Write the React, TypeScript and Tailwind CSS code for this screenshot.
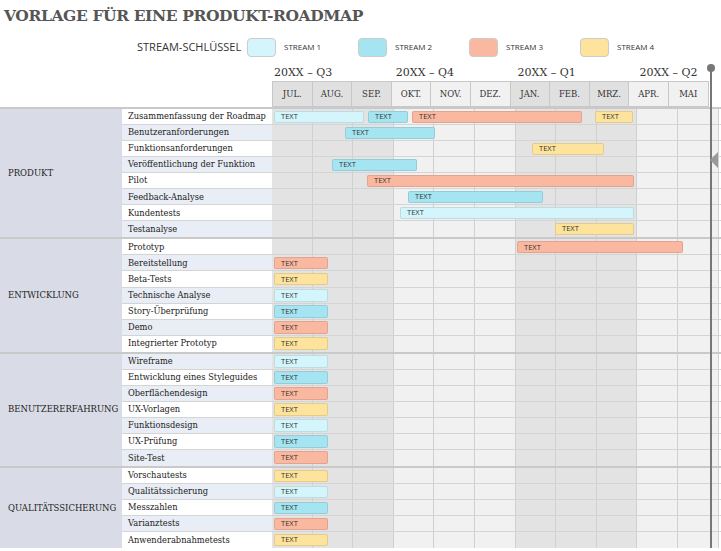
import React from "react";

const C: Record<string, string> = { a: "#d3f5fb", b: "#a5e5f2", c: "#fbb8a0", d: "#fde39b" };
const months = ["JUL.", "AUG.", "SEP.", "OKT.", "NOV.", "DEZ.", "JAN.", "FEB.", "MRZ.", "APR.", "MAI"];
type Bar = [number, number, string, boolean?];
const px = (x: number) => x - 272;
const groups: { name: string; rows: { t: string; bars: Bar[] }[] }[] = [
  { name: "PRODUKT", rows: [
    { t: "Zusammenfassung der Roadmap", bars: [[274, 364, "a"], [368, 408, "b"], [412, 582, "c"], [595, 633, "d"]] },
    { t: "Benutzeranforderungen", bars: [[345, 435, "b"]] },
    { t: "Funktionsanforderungen", bars: [[532, 604, "d"]] },
    { t: "Veröffentlichung der Funktion", bars: [[332, 417, "b"]] },
    { t: "Pilot", bars: [[367, 634, "c"]] },
    { t: "Feedback-Analyse", bars: [[408, 543, "b"]] },
    { t: "Kundentests", bars: [[400, 634, "a"]] },
    { t: "Testanalyse", bars: [[555, 634, "d"]] },
  ]},
  { name: "ENTWICKLUNG", rows: [
    { t: "Prototyp", bars: [[517, 683, "c"]] },
    ...[["Bereitstellung", "c"], ["Beta-Tests", "d"], ["Technische Analyse", "a"], ["Story-Überprüfung", "b"], ["Demo", "c"], ["Integrierter Prototyp", "d"]].map(([t, c]) => ({ t, bars: [[274, 328, c]] as Bar[] })),
  ]},
  { name: "BENUTZERERFAHRUNG", rows: [["Wireframe", "a"], ["Entwicklung eines Styleguides", "b"], ["Oberflächendesign", "c"], ["UX-Vorlagen", "d"], ["Funktionsdesign", "a"], ["UX-Prüfung", "b"], ["Site-Test", "c"]].map(([t, c]) => ({ t, bars: [[274, 328, c]] as Bar[] })) },
  { name: "QUALITÄTSSICHERUNG", rows: [["Vorschautests", "d"], ["Qualitätssicherung", "a"], ["Messzahlen", "b"], ["Varianztests", "c"], ["Anwenderabnahmetests", "d"]].map(([t, c]) => ({ t, bars: [[274, 328, c]] as Bar[] })) },
];
const dark = (i: number) => i < 3 || (i >= 6 && i < 9);

export default function App() {
  let ri = 0;
  return (
    <div className="relative w-[721px] h-[551px] bg-white overflow-hidden" style={{ fontFamily: "'DejaVu Serif', serif" }}>
      <div className="pl-[4px] pt-[4px] text-[15.5px] font-bold text-[#555] tracking-tight h-[30px]">VORLAGE FÜR EINE PRODUKT-ROADMAP</div>
      <div className="flex items-center h-[34px] pl-[137px] text-[#333]" style={{ fontFamily: "'Open Sans', sans-serif" }}>
        <span className="text-[11px] w-[110px] shrink-0">STREAM-SCHLÜSSEL</span>
        {[["a", "STREAM 1"], ["b", "STREAM 2"], ["c", "STREAM 3"], ["d", "STREAM 4"]].map(([c, l]) => (
          <div key={l} className="flex items-center w-[111px] shrink-0">
            <div className="w-[29px] h-[19px] rounded border border-[#ccc]" style={{ background: C[c] }} />
            <span className="text-[8px] ml-[8px]">{l}</span>
          </div>
        ))}
      </div>
      <div className="flex h-[17px] pl-[272px] text-[11px] text-[#333] items-end">
        {["20XX – Q3", "20XX – Q4", "20XX – Q1", "20XX – Q2"].map(q => <div key={q} className="w-[121.8px] shrink-0 pl-[2px]">{q}</div>)}
      </div>
      <div className="flex h-[26px] pl-[272px]">
        {months.map((m, i) => (
          <div key={m} className={`w-[40.6px] shrink-0 border border-[#c8c8c8] -ml-px first:ml-0 flex items-center justify-center text-[8.5px] text-[#333] ${dark(i) ? "bg-[#e0e0e0]" : "bg-[#f1f1f1]"}`}>{m}</div>
        ))}
      </div>
      <div className="flex flex-col">
        {groups.map(g => (
          <div key={g.name} className="flex border-t-2 border-[#c9c9c9]">
            <div className="w-[122px] shrink-0 bg-[#d9dce7] flex items-center pl-[8px] text-[8.5px] text-[#222]">{g.name}</div>
            <div className="flex flex-col">
              {g.rows.map(r => {
                const idx = ri++;
                return (
                  <div key={r.t} className="flex h-[16.05px] border-b border-[#d4d4d4] last:border-b-0">
                    <div className={`w-[150px] shrink-0 pl-[6px] text-[8.3px] text-[#222] flex items-center whitespace-nowrap ${idx % 2 ? "bg-[#e9edf5]" : "bg-white"}`}>{r.t}</div>
                    <div className="relative flex w-[449px] shrink-0">
                      {months.map((m, i) => <div key={m} className={`w-[40.6px] shrink-0 h-full border-r border-[#d0d0d0] ${dark(i) ? "bg-[#e3e3e3]" : "bg-[#f1f1f1]"}`} />)}
                      {r.bars.map(([s, e, c], k) => (
                        <div key={k} className="absolute top-[1.5px] h-[12.5px] rounded-[2px] border border-black/10 flex items-center pl-[6px] text-[7.5px] text-[#333]" style={{ left: px(s), width: e - s, background: C[c], fontFamily: "'Open Sans', sans-serif" }}>TEXT</div>
                      ))}
                    </div>
                  </div>
                );
              })}
            </div>
          </div>
        ))}
      </div>
      <div className="absolute left-[710px] top-[68px] w-[2px] h-[480px] bg-[#777]" />
      <div className="absolute left-[707px] top-[64px] w-[8px] h-[8px] rounded-full bg-[#777]" />
      <div className="absolute left-[710px] top-[152px] w-0 h-0 border-y-[8px] border-y-transparent border-r-[8px] border-r-[#999]" />
    </div>
  );
}
